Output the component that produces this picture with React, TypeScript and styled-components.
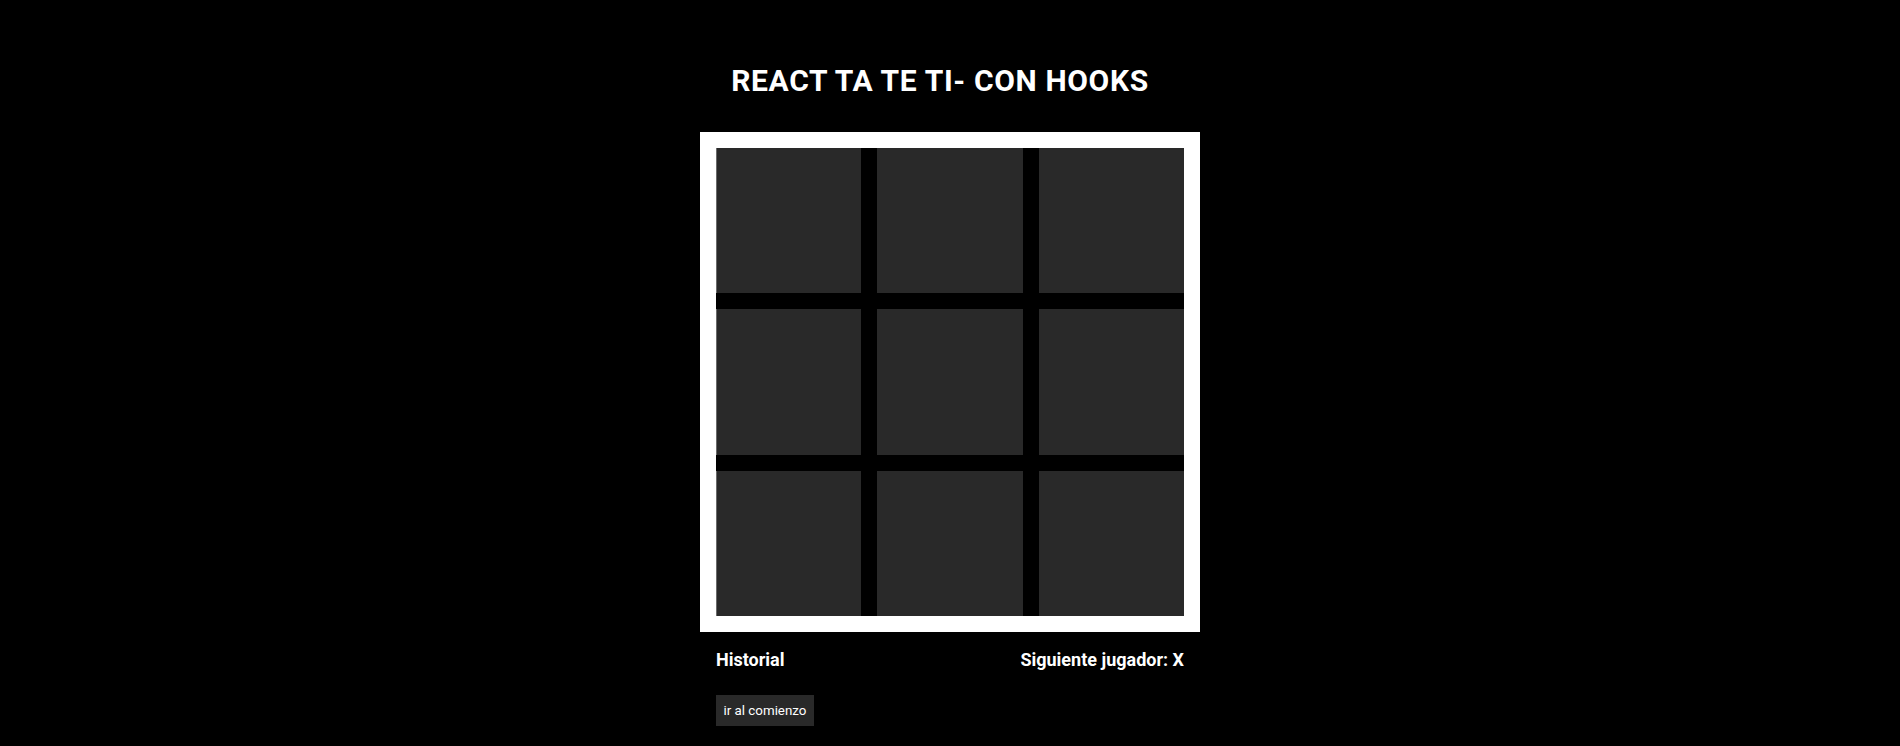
import React, { useState } from "react";
import styled, { createGlobalStyle } from "styled-components";

const GlobalStyle = createGlobalStyle`
  html, body {
    margin: 0;
    padding: 0;
    background: #000;
    color: #fff;
    font-family: Roboto, "Liberation Sans", Arial, sans-serif;
  }
`;

const Page = styled.main`
  display: flex;
  flex-direction: column;
  align-items: center;
  padding-top: 63px;
  min-height: 746px;
  box-sizing: border-box;
`;

const Title = styled.h1`
  margin: 0 20px 34px 0;
  font-size: 30px;
  font-weight: 700;
  line-height: 35px;
  letter-spacing: 0.65px;
`;

const Board = styled.div`
  width: 500px;
  height: 500px;
  box-sizing: border-box;
  border: 16px solid #fff;
  background: #000;
  display: grid;
  grid-template-columns: repeat(3, 1fr);
  grid-template-rows: repeat(3, 1fr);
  gap: 16px;
`;

const Cell = styled.button<{ $first?: boolean }>`
  border: none;
  padding: 0;
  margin: 0;
  background: #292929;
  box-shadow: ${(p) => (p.$first ? "inset 1px 0 0 #6a6a6a" : "none")};
  color: #fff;
  font-family: inherit;
  font-size: 64px;
  font-weight: 700;
  cursor: pointer;
`;

const Footer = styled.div`
  width: 500px;
  box-sizing: border-box;
  padding: 17px 16px 0;
  display: flex;
  flex-direction: column;
  align-items: flex-start;
`;

const InfoRow = styled.div`
  width: 100%;
  display: flex;
  justify-content: space-between;
  align-items: baseline;
`;

const Heading = styled.h3`
  margin: 0;
  font-size: 18px;
  font-weight: 700;
  line-height: 21px;
`;

const MoveList = styled.ol`
  list-style: none;
  margin: 25px 0 0;
  padding: 0;
`;

const MoveButton = styled.button`
  border: none;
  background: #292929;
  color: #fff;
  font-family: Roboto, "Liberation Sans", Arial, sans-serif;
  font-size: 13.33px;
  line-height: 15px;
  padding: 8px 7.5px;
  cursor: pointer;
`;

export default function App() {
  const [squares, setSquares] = useState<(string | null)[]>(Array(9).fill(null));
  const [xNext, setXNext] = useState(true);

  const play = (i: number) => {
    if (squares[i]) return;
    const next = squares.slice();
    next[i] = xNext ? "X" : "O";
    setSquares(next);
    setXNext(!xNext);
  };

  const reset = () => {
    setSquares(Array(9).fill(null));
    setXNext(true);
  };

  return (
    <>
      <GlobalStyle />
      <Page>
        <Title>REACT TA TE TI- CON HOOKS</Title>
        <Board>
          {squares.map((s, i) => (
            <Cell key={i} $first={i % 3 === 0} onClick={() => play(i)}>
              {s}
            </Cell>
          ))}
        </Board>
        <Footer>
          <InfoRow>
            <Heading>Historial</Heading>
            <Heading>Siguiente jugador: {xNext ? "X" : "O"}</Heading>
          </InfoRow>
          <MoveList>
            <li>
              <MoveButton onClick={reset}>ir al comienzo</MoveButton>
            </li>
          </MoveList>
        </Footer>
      </Page>
    </>
  );
}
